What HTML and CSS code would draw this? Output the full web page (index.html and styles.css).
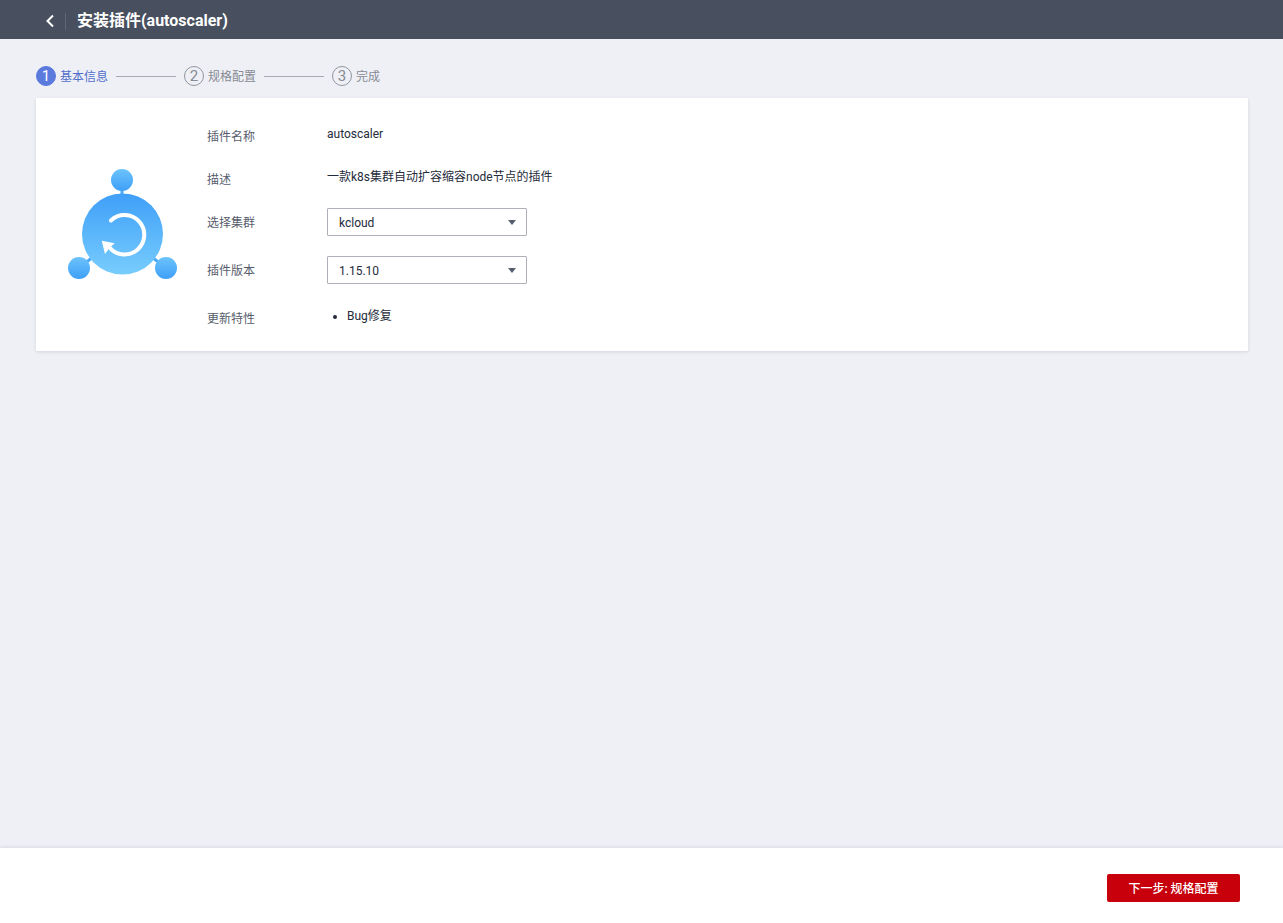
FILE: index.html
```html
<!DOCTYPE html>
<html lang="zh-CN">
<head>
<meta charset="utf-8">
<title>安装插件(autoscaler)</title>
<link rel="stylesheet" href="styles.css">
</head>
<body>
<header class="topbar">
  <a class="back" aria-label="返回">
    <svg width="10" height="14" viewBox="0 0 10 14"><path d="M8 1.500 2.500 7 8 12.500" fill="none" stroke="#fff" stroke-width="2"/></svg>
  </a>
  <h1 class="title">安装插件(autoscaler)</h1>
</header>
<main class="content">
  <ol class="steps">
    <li class="step active"><span class="num">1</span><span class="step-label">基本信息</span></li>
    <li class="line"></li>
    <li class="step"><span class="num">2</span><span class="step-label">规格配置</span></li>
    <li class="line"></li>
    <li class="step"><span class="num">3</span><span class="step-label">完成</span></li>
  </ol>
  <section class="card">
    <div class="logo">
      <svg width="112" height="112" viewBox="0 0 112 112">
        <defs>
          <linearGradient id="big" x1="0" y1="0" x2="0" y2="1"><stop offset="0" stop-color="#3f9ff8"/><stop offset="1" stop-color="#78cdfd"/></linearGradient>
          <linearGradient id="small" x1="0" y1="0" x2="0" y2="1"><stop offset="0" stop-color="#6cc3fb"/><stop offset="1" stop-color="#3f9ff8"/></linearGradient>
        </defs>
        <path d="M55 15V40M12 99 55 65 99 99" fill="none" stroke="#4aa8f8" stroke-width="3"/>
        <circle cx="55" cy="11" r="11" fill="url(#small)"/>
        <circle cx="55.500" cy="65" r="40.500" fill="url(#big)"/>
        <circle cx="12" cy="99" r="11" fill="url(#small)"/>
        <circle cx="99" cy="99" r="11" fill="url(#small)"/>
        <path d="M44 51.500A19.700 19.700 0 1 1 42.700 78.700" fill="none" stroke="#fff" stroke-width="4" stroke-linecap="round"/>
        <path d="M34.700 71.700 47.700 74.300 42.300 79.300 38 85z" fill="#fff"/>
      </svg>
    </div>
    <div class="form">
      <div class="row text-row"><span class="label">插件名称</span><span class="value">autoscaler</span></div>
      <div class="row text-row"><span class="label">描述</span><span class="value">一款k8s集群自动扩容缩容node节点的插件</span></div>
      <div class="row select-row"><span class="label">选择集群</span><div class="select">kcloud<i class="caret"></i></div></div>
      <div class="row select-row"><span class="label">插件版本</span><div class="select">1.15.10<i class="caret"></i></div></div>
      <div class="row text-row last-row"><span class="label">更新特性</span><ul class="features"><li>Bug修复</li></ul></div>
    </div>
  </section>
</main>
<footer class="footer">
  <button class="next">下一步: 规格配置</button>
</footer>
</body>
</html>
```
FILE: styles.css
```css
* { box-sizing: border-box; }
html, body { height: 100%; }
body {
  margin: 0;
  height: 923px;
  display: flex;
  flex-direction: column;
  overflow: hidden;
  background: #eef0f5;
  color: #252b3a;
  font: 12px/18px Roboto, "Noto Sans CJK SC", sans-serif;
}
.topbar {
  height: 39px;
  flex: none;
  display: flex;
  align-items: center;
  padding: 3px 0 0 45px;
  background: #484f5e;
  color: #fff;
}
.back {
  width: 21px;
  height: 17px;
  display: flex;
  align-items: center;
  border-right: 1px solid #5f6675;
}
.title {
  margin: 0 0 0 11px;
  font-size: 16px;
  font-weight: 700;
  line-height: 24px;
}
.content {
  flex: 1;
  padding: 27px 35px 0 36px;
}
.steps {
  list-style: none;
  margin: 0 0 12px;
  padding: 0;
  height: 20px;
  display: flex;
  align-items: center;
}
.step {
  display: flex;
  align-items: center;
  color: #878b94;
}
.step-label { padding-top: 1px; }
.num {
  width: 20px;
  height: 20px;
  margin-right: 4px;
  border: 1px solid #92969f;
  border-radius: 50%;
  font-size: 15px;
  line-height: 18px;
  text-align: center;
}
.step.active { color: #526ecc; }
.step.active .num {
  background: #5a7ade;
  border-color: #5a7ade;
  color: #fff;
}
.line {
  width: 60px;
  height: 1px;
  margin: 0 8px;
  background: #a7aab2;
}
.card {
  height: 253px;
  display: flex;
  background: #fff;
  box-shadow: 0 1px 3px rgba(60, 70, 90, .15);
}
.logo {
  width: 171px;
  flex: none;
  padding: 71px 0 0 31px;
}
.form {
  padding-top: 27px;
  color: #4f5563;
}
.row { display: flex; }
.label {
  width: 120px;
  flex: none;
  color: #575d6c;
}
.value { color: #252b3a; margin-top: -3px; }
.text-row { height: 43px; padding-top: 3px; }
.last-row { padding-top: 6px; }
.select-row { height: 48px; }
.select-row .label { padding-top: 6px; }
.select-row:nth-child(3) { margin-top: -3px; }
.select {
  width: 200px;
  height: 28px;
  position: relative;
  padding: 5px 11px;
  background: #fff;
  border: 1px solid #adb0b8;
  border-radius: 1px;
  color: #252b3a;
}
.caret {
  position: absolute;
  right: 10px;
  top: 11px;
  border: 4px solid transparent;
  border-top: 5px solid #575d6c;
  border-bottom: 0;
}
.features {
  margin: -3px 0 0;
  padding-left: 20px;
  color: #252b3a;
}
.footer {
  height: 75px;
  flex: none;
  display: flex;
  justify-content: flex-end;
  align-items: flex-start;
  padding: 26px 43px 0 0;
  background: #fff;
  box-shadow: 0 -1px 3px rgba(60, 70, 90, .12);
}
.next {
  width: 133px;
  height: 28px;
  padding: 1px 0 0;
  border: 0;
  border-radius: 2px;
  background: #c7000b;
  color: #fff;
  font: inherit;
  font-weight: 500;
}
```
